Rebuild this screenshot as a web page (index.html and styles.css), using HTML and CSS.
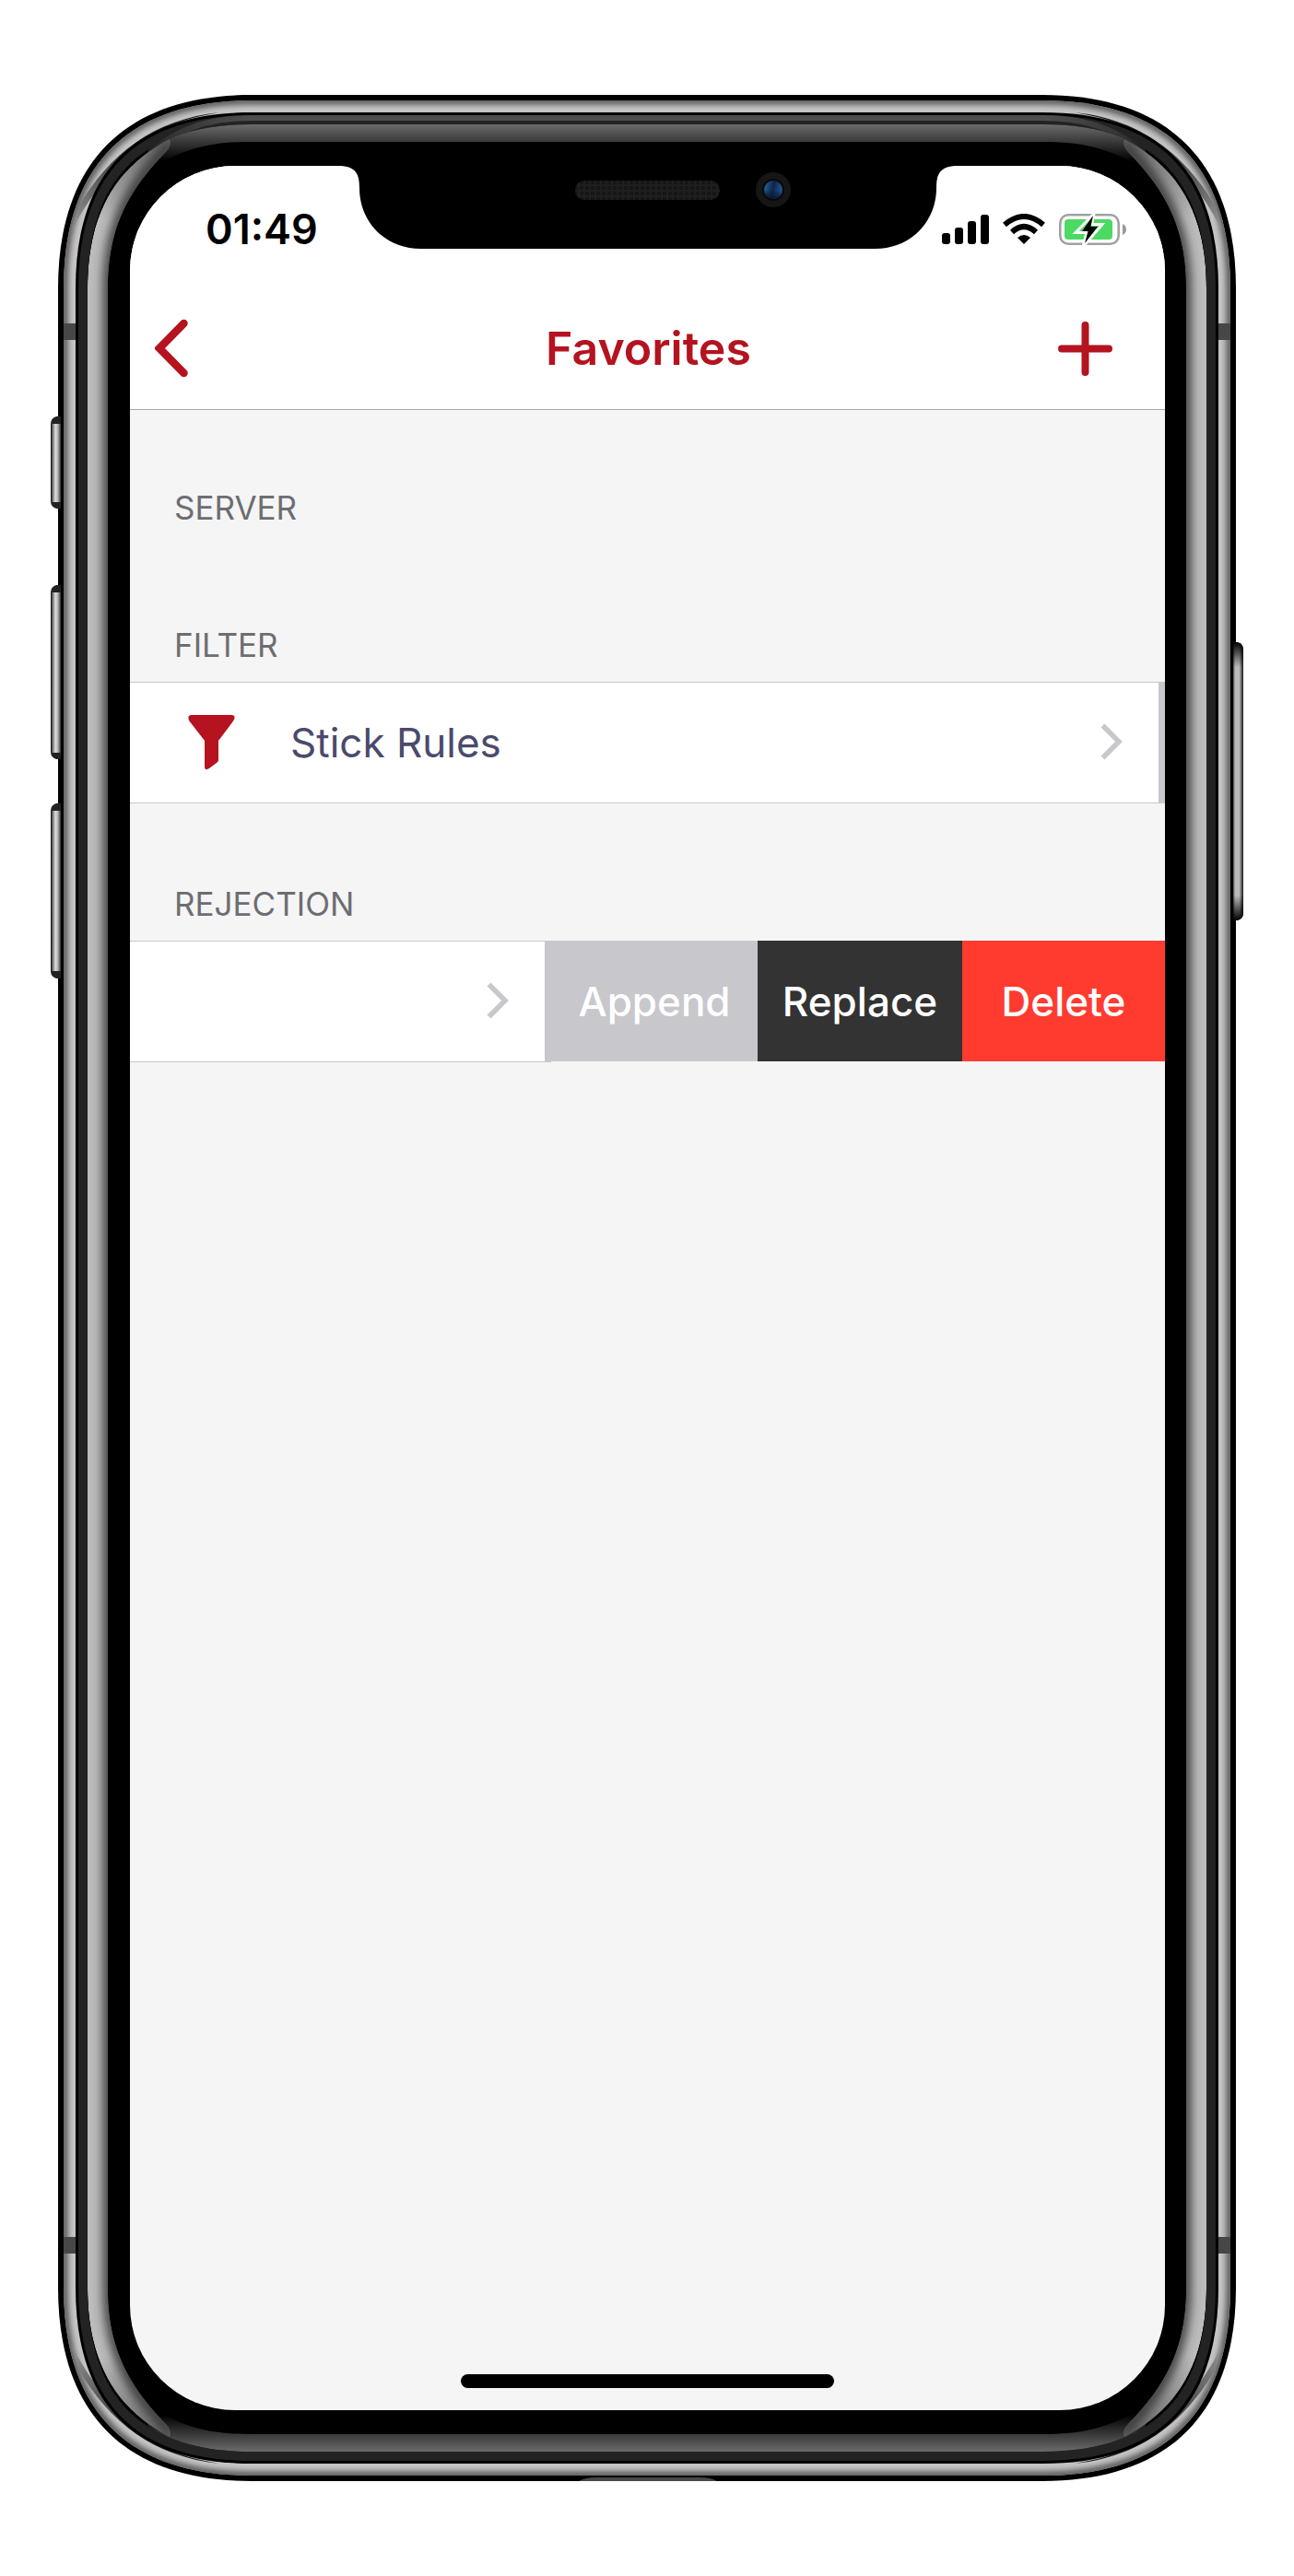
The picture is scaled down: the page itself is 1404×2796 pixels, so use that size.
FILE: index.html
```html
<!DOCTYPE html>
<html lang="en">
<head>
<meta charset="utf-8">
<meta name="viewport" content="width=device-width, initial-scale=1">
<title>Favorites</title>
<link rel="stylesheet" href="styles.css">
</head>
<body>
<div class="stage">
  <div class="phone">
    <svg class="phone-frame" viewBox="-8 0 1294 2590" preserveAspectRatio="none" aria-hidden="true">
      <defs>
        <filter id="soft" x="-5%" y="-5%" width="110%" height="110%"><feGaussianBlur stdDeviation="3"/></filter>
        <filter id="softer" x="-50%" y="-5%" width="200%" height="110%"><feGaussianBlur stdDeviation="6"/></filter>
        <path id="ring6" d="M6 210C6 76 76 6 210 6H1068C1202 6 1272 76 1272 210V2380C1272 2514 1202 2584 1068 2584H210C76 2584 6 2514 6 2380Z"/>
        <path id="ring32" d="M32 210C32 91 91 32 210 32H1068C1187 32 1246 91 1246 210V2380C1246 2499 1187 2558 1068 2558H210C91 2558 32 2499 32 2380Z"/>
        <path id="glare" d="M32 1295V210C32 130 62 78 121 48Q124 54 118 61C80 100 54 140 54 210V2380C54 2450 80 2490 118 2529Q124 2536 121 2542C62 2512 32 2460 32 2380Z"/>
        <clipPath id="clip6"><use href="#ring6"/></clipPath>
        <clipPath id="clip32"><use href="#ring32"/></clipPath>
        <clipPath id="clipGlare"><use href="#glare"/></clipPath>
        <linearGradient id="topShine" gradientUnits="userSpaceOnUse" x1="0" y1="31" x2="0" y2="72"><stop offset="0" stop-color="#6e6e6e"/><stop offset="1" stop-color="#000"/></linearGradient>
        <linearGradient id="glareFill" gradientUnits="userSpaceOnUse" x1="0" y1="48" x2="0" y2="2542"><stop offset="0" stop-color="#6c6c6c"/><stop offset=".035" stop-color="#bcbcbc"/><stop offset=".965" stop-color="#bcbcbc"/><stop offset="1" stop-color="#6c6c6c"/></linearGradient>
        <linearGradient id="lip" gradientUnits="userSpaceOnUse" x1="70" y1="0" x2="1208" y2="0"><stop offset="0" stop-color="#232323"/><stop offset=".12" stop-color="#4e4e4e"/><stop offset=".88" stop-color="#4e4e4e"/><stop offset="1" stop-color="#232323"/></linearGradient>
        <linearGradient id="crease" gradientUnits="userSpaceOnUse" x1="120" y1="25" x2="20" y2="135"><stop offset="0" stop-color="#222"/><stop offset=".6" stop-color="#505050"/><stop offset="1" stop-color="#8a8a8a"/></linearGradient>
        <linearGradient id="key" x1="0" y1="0" x2="1" y2="0"><stop offset="0" stop-color="#333"/><stop offset=".2" stop-color="#999"/><stop offset=".45" stop-color="#ddd"/><stop offset=".7" stop-color="#aaa"/><stop offset="1" stop-color="#333"/></linearGradient>
        <linearGradient id="power" x1="0" y1="0" x2="1" y2="0"><stop offset="0" stop-color="#444"/><stop offset=".2" stop-color="#bbb"/><stop offset=".6" stop-color="#b8b8b8"/><stop offset=".85" stop-color="#555"/><stop offset="1" stop-color="#111"/></linearGradient>
        <linearGradient id="powerCap" x1="0" y1="0" x2="0" y2="1"><stop offset="0" stop-color="#000"/><stop offset=".09" stop-color="#000" stop-opacity="0"/><stop offset=".91" stop-color="#000" stop-opacity="0"/><stop offset="1" stop-color="#000"/></linearGradient>
        <g id="corner">
          <path d="M175 19C105 26 55 64 22 122L14 148C40 100 60 80 95 48C115 34 140 25 175 19Z" fill="url(#crease)"/>
        </g>
      </defs>
      <path d="M0 210C0 73 73 0 210 0H1068C1205 0 1278 73 1278 210V2380C1278 2517 1205 2590 1068 2590H210C73 2590 0 2517 0 2380Z"/>
      <use href="#ring6" fill="#c7c4c5"/>
      <g clip-path="url(#clip6)">
        <use href="#ring6" fill="none" stroke="#585858" stroke-width="9" filter="url(#soft)"/>
        <use href="#corner"/>
        <use href="#corner" transform="translate(1278 0) scale(-1 1)"/>
        <use href="#corner" transform="translate(0 2590) scale(1 -1)"/>
        <use href="#corner" transform="translate(1278 2590) scale(-1 -1)"/>
        <path d="M6 248h13v18H6zM1259 248h13v18h-13zM6 2325h13v18H6zM1259 2325h13v18h-13z" fill="#474747"/>
      </g>
      <path d="M19 210C19 83 83 19 210 19H1068C1195 19 1259 83 1259 210V2380C1259 2507 1195 2571 1068 2571H210C83 2571 19 2507 19 2380Z"/>
      <path d="M22 210C22 85 85 22 210 22H1068C1193 22 1256 85 1256 210V2380C1256 2505 1193 2568 1068 2568H210C85 2568 22 2505 22 2380Z" fill="#232323"/>
      <path d="M75 97C105 45 150 25 210 25H1068C1128 25 1173 45 1203 97" fill="none" stroke="url(#lip)" stroke-width="6"/>
      <use href="#ring32"/>
      <g clip-path="url(#clip32)">
        <path id="shine" d="M96 84L100 20H1178L1182 84C1142 56 1108 51 1068 51H210C170 51 136 56 96 84Z" fill="url(#topShine)"/>
        <use href="#shine" transform="translate(0 2590) scale(1 -1)"/>
        <g id="side" clip-path="url(#clipGlare)">
          <use href="#glare" fill="url(#glareFill)"/>
          <path d="M124 52C80 98 56 140 56 210V2380C56 2450 80 2492 124 2538" fill="none" stroke="#383838" stroke-width="14" filter="url(#softer)"/>
        </g>
        <use href="#side" transform="translate(1278 0) scale(-1 1)"/>
      </g>
      <path d="M3 349H-2Q-8 351 -8 357V441Q-8 447 -2 449H3ZM3 532H-2Q-8 534 -8 540V713Q-8 719 -2 721H3ZM3 769H-2Q-8 771 -8 777V951Q-8 957 -2 959H3Z" fill="#222"/>
      <path d="M-7 357h10v85H-7zM-7 540h10v174H-7zM-7 777h10v174H-7z" fill="url(#key)"/>
      <path d="M1275 594H1280Q1286 596 1286 602V888Q1286 894 1280 896H1275Z" fill="url(#power)"/>
      <path d="M1275 594H1280Q1286 596 1286 602V888Q1286 894 1280 896H1275Z" fill="url(#powerCap)"/>
      <path d="M565 2590Q572 2586 584 2586H696Q708 2586 715 2590Z" fill="#4a4a4a"/>
    </svg>

    <div class="screen">
      <svg class="notch" viewBox="0 0 672 90" aria-hidden="true">
        <defs>
          <pattern id="mesh" width="6" height="6" patternUnits="userSpaceOnUse"><rect width="6" height="6" fill="#161616"/><path d="M0 3h6M3 0v6" stroke="#1f1f1f" stroke-width="2"/></pattern>
          <linearGradient id="lens" x1="0" y1=".3" x2="1" y2=".5"><stop offset="0" stop-color="#27609c"/><stop offset=".5" stop-color="#10244a"/><stop offset="1" stop-color="#1f5c9a"/></linearGradient>
          <linearGradient id="lensShade" x1="0" y1="0" x2="0" y2="1"><stop offset=".5" stop-color="#0b1530" stop-opacity="0"/><stop offset="1" stop-color="#0b1530"/></linearGradient>
        </defs>
        <path d="M0 0C20 0 23 10 23 24C23 60 50 90 90 90H582C622 90 649 60 649 24C649 10 652 0 672 0Z"/>
        <rect x="257" y="16" width="157" height="21" rx="10" fill="url(#mesh)"/>
        <circle cx="472" cy="26" r="19" fill="#161616"/>
        <circle cx="472" cy="26" r="12" fill="#090909"/>
        <circle cx="472" cy="26" r="10" fill="url(#lens)"/>
        <circle cx="472" cy="26" r="10" fill="url(#lensShade)"/>
      </svg>

      <div class="status-bar">
        <time class="clock">01:49</time>
        <div class="status-icons">
          <svg width="51" height="34" viewBox="0 0 51 34" role="img" aria-label="Signal"><rect y="21" width="9" height="12" rx="3"/><rect x="14" y="15" width="9" height="18" rx="3"/><rect x="28" y="8" width="9" height="25" rx="3"/><rect x="42" y="1" width="9" height="32" rx="3"/></svg>
          <svg width="46" height="34" viewBox="0 0 46 34" role="img" aria-label="Wi-Fi"><path d="M23 33L16 26Q23 20 30 26Z" /><path d="M10 20Q23 8 36 20" fill="none" stroke="#000" stroke-width="6"/><path d="M2 12Q23 -6 44 12" fill="none" stroke="#000" stroke-width="6"/></svg>
          <svg width="73" height="34" viewBox="0 0 73 34" role="img" aria-label="Battery charging"><rect x="1.300" y="1.300" width="63.400" height="31.400" rx="9" fill="none" stroke="#a1a1a1" stroke-width="2.600"/><path d="M69 11Q73 13 73 17T69 23Z" fill="#999"/><rect x="6" y="6" width="52" height="22" rx="4" fill="#4cd964"/><path d="M38 0L18 20.500H30L26 36L47 11.500H35.500Z" fill="#4cd964" stroke="#fff" stroke-width="3"/><path d="M37 2L25 19H31.500L28 32L42 14H34.500Z"/></svg>
        </div>
      </div>

      <header class="nav-bar">
        <button class="nav-button" type="button" aria-label="Back"><svg width="36" height="64" viewBox="0 0 36 64"><path d="M31.500 5L5 32L31.500 59" fill="none" stroke="currentColor" stroke-width="8.500" stroke-linecap="round"/></svg></button>
        <h1 class="nav-title">Favorites</h1>
        <button class="nav-button nav-button-add" type="button" aria-label="Add"><svg width="59" height="59" viewBox="0 0 59 59"><path d="M4 29.500H55M29.500 4V55" fill="none" stroke="currentColor" stroke-width="8" stroke-linecap="round"/></svg></button>
      </header>

      <main class="list">
        <section>
          <h2 class="section-title">SERVER</h2>
        </section>
        <section>
          <h2 class="section-title">FILTER</h2>
          <div class="row">
            <a class="cell" href="#stick-rules">
              <svg class="cell-icon" width="51" height="60" viewBox="0 0 51 60" aria-hidden="true"><path d="M4 0H47Q52 0 50 5Q49 7 33 28V49Q33 51 31 52L23 58Q18 61 18 56V28L1 6Q-1 0 4 0Z"/></svg>
              <span class="cell-label">Stick Rules</span>
              <svg class="chevron" width="24" height="42" viewBox="0 0 24 42" aria-hidden="true"><path d="M2.500 2.500L20 20L2.500 37.500" fill="none" stroke="currentColor" stroke-width="5.500"/></svg>
            </a>
          </div>
        </section>
        <section>
          <h2 class="section-title">REJECTION</h2>
          <div class="row">
            <a class="cell" href="#rejection" aria-label="Rejection favorite">
              <svg class="chevron" width="24" height="42" viewBox="0 0 24 42" aria-hidden="true"><path d="M2.500 2.500L20 20L2.500 37.500" fill="none" stroke="currentColor" stroke-width="5.500"/></svg>
            </a>
            <div class="actions">
              <button class="action action-append" type="button">Append</button>
              <button class="action action-replace" type="button">Replace</button>
              <button class="action action-delete" type="button">Delete</button>
            </div>
          </div>
        </section>
      </main>

      <div class="home-indicator"></div>
    </div>
  </div>
</div>
</body>
</html>
```
FILE: styles.css
```css
*, *::before, *::after { box-sizing: border-box; }

:root {
  --brand: #b4131f;
  --line: #c8c7cc;
  --surface: #f5f5f5;
}

body {
  margin: 0;
  background: #fff;
  font-family: Inter, "Liberation Sans", sans-serif;
}

button {
  margin: 0;
  padding: 0;
  border: 0;
  background: none;
  color: inherit;
  font: inherit;
  cursor: pointer;
}

svg { display: block; }

.stage {
  display: flex;
  min-height: 100vh;
  padding: 103px 63px;
}

.phone {
  position: relative;
  display: flex;
  flex: 1;
  padding: 77px 77px 77px 78px;
}

.phone-frame {
  position: absolute;
  top: 0;
  left: -8px;
  width: calc(100% + 16px);
  height: 100%;
}

.screen {
  position: relative;
  display: flex;
  flex: 1;
  flex-direction: column;
  min-width: 0;
  overflow: hidden;
  border-radius: 114px;
  background: var(--surface);
}

.notch {
  position: absolute;
  top: 0;
  left: 50%;
  width: 672px;
  transform: translateX(-50%);
}

.status-bar {
  display: flex;
  align-items: center;
  justify-content: space-between;
  height: 132px;
  padding: 6px 42px 0 82px;
  background: #fff;
}

.clock {
  font-size: 45px;
  font-weight: 600;
  line-height: 52px;
}

.status-icons {
  display: flex;
  gap: 15px;
}

.nav-bar {
  display: grid;
  grid-template-columns: 1fr auto 1fr;
  align-items: center;
  height: 133px;
  padding: 0 57px 0 27px;
  border-bottom: 1px solid #a9a9ac;
  background: #fff;
  color: var(--brand);
}

.nav-button { justify-self: start; }

.nav-button-add { justify-self: end; }

.nav-title {
  margin: 0;
  padding-left: 32px;
  font-size: 50px;
  font-weight: 600;
  line-height: 60px;
}

.list { flex: 1; }

.section-title {
  margin: 0;
  padding: 89px 48px 20px;
  color: #6d6d72;
  font-size: 35px;
  font-weight: 400;
  line-height: 40px;
}

section:first-child .section-title { padding-top: 86px; }

.row {
  display: flex;
  height: 132px;
}

.cell {
  display: flex;
  flex: 1;
  align-items: center;
  min-width: 0;
  padding: 0 39px 0 63px;
  border: solid var(--line);
  border-width: 1px 7px 1px 0;
  background: #fff;
  color: #4a4a6c;
  text-decoration: none;
}

.cell-icon {
  flex: none;
  margin-right: 60px;
  fill: var(--brand);
}

.cell-label {
  font-size: 44px;
  line-height: 52px;
}

.chevron {
  flex: none;
  margin-left: auto;
  color: #c7c7cc;
}

.actions {
  display: flex;
  flex: none;
  margin-bottom: 1px;
}

.action {
  width: 222px;
  color: #fff;
  font-size: 44px;
  font-weight: 500;
  line-height: 52px;
}

.action-append {
  width: 224px;
  background: #c7c7cc;
}

.action-replace { background: #333; }

.action-delete {
  width: 220px;
  background: #ff3b30;
}

.home-indicator {
  align-self: center;
  width: 36%;
  height: 15px;
  margin-bottom: 24px;
  border-radius: 8px;
  background: #000;
}
```
